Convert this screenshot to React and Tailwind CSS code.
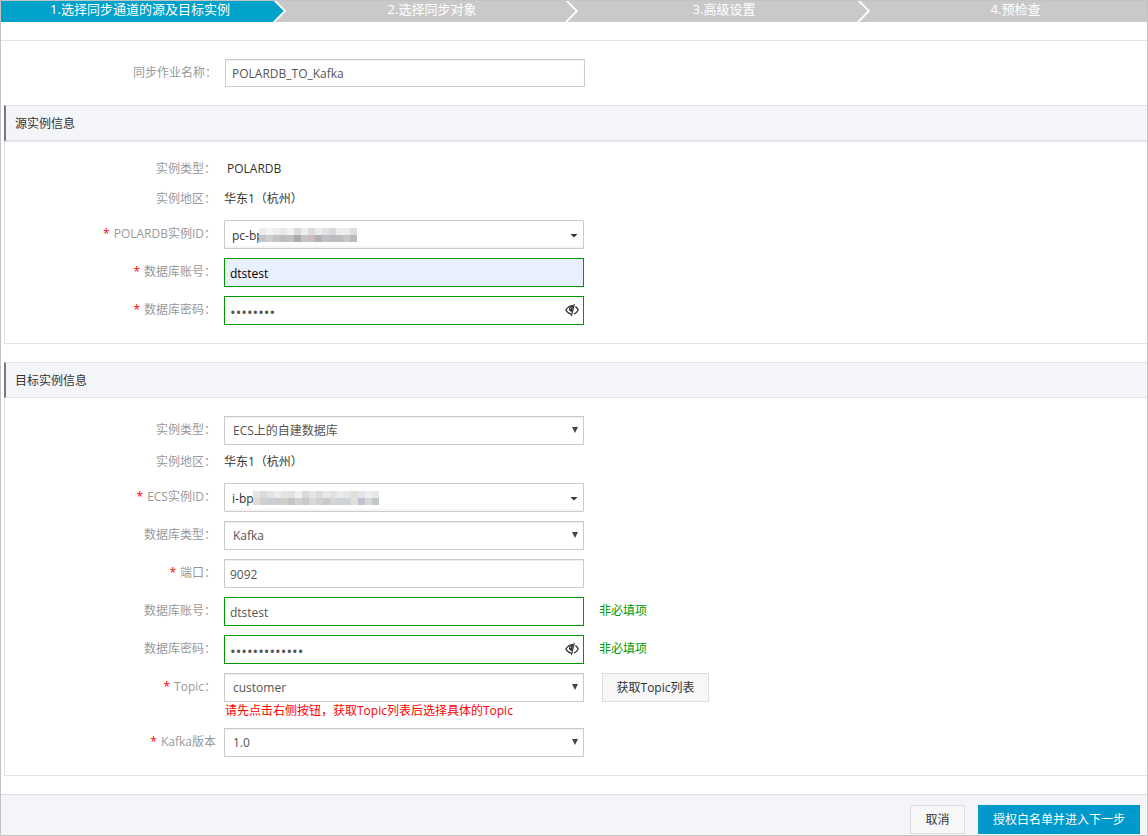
import React from "react";

const STEPS = [
  { text: "1.选择同步通道的源及目标实例", active: true },
  { text: "2.选择同步对象" },
  { text: "3.高级设置" },
  { text: "4.预检查" },
];

const MASK_SOURCE = [
  ["#ececee", "#f4f4f4", "#eeeeee", "#e9e9ea", "#f3f2ee", "#dcdcdc", "#eeeeee", "#dcdbdd", "#ececec", "#e2e2e4", "#d8d9d8", "#ededef", "#ececec", "#dedede"],
  ["#c6c4c6", "#cfcfcf", "#c3c3c5", "#bdbdbf", "#c1c1c1", "#a9aca9", "#c4c4c6", "#c8bcc0", "#b0b0b2", "#c0c0c4", "#b9bdc0", "#c0beb8", "#c6c6c8", "#b8bbbc"],
];

const MASK_TARGET = [
  ["#e6e4e4", "#dadadc", "#e2e3e6", "#ececec", "#e4e4e6", "#e2e2e2", "#f0f0f0", "#dadade", "#e6e6e8", "#dcdade", "#e8e8e8", "#e0e2e2", "#ebebeb", "#e6e6e8", "#e2dedc", "#e4e4ec", "#ededed", "#e6e8e6"],
  ["#dedcd4", "#ced0d2", "#cccfd0", "#c9cdd2", "#d2d0cc", "#c4c6c6", "#d2d2d4", "#ccc8c6", "#d8d8da", "#d0d0cc", "#ccc6c4", "#d4d4d8", "#ced2d0", "#ccd4d6", "#e2e0da", "#c6c2cc", "#d6d8da", "#c4c8c8"],
];

function Chevron({ active }) {
  return (
    <svg className="h-[21px] w-[14px] shrink-0" viewBox="0 0 14 21" aria-hidden="true">
      {active && <polygon points="0,0 3,0 13,10 2,21 0,21" fill="#00a2ca" />}
      <path d="M2 -1L13 10L1 22" fill="none" stroke="#fff" strokeWidth="1.8" />
    </svg>
  );
}

function Mosaic({ rows }) {
  return (
    <svg
      className="shrink-0"
      width={rows[0].length * 7}
      height="14"
      shapeRendering="crispEdges"
      aria-hidden="true"
    >
      {rows.map((row, y) =>
        row.map((fill, x) => (
          <rect key={`${x}-${y}`} x={x * 7} y={y * 7} width="7" height="7" fill={fill} />
        ))
      )}
    </svg>
  );
}

function EyeOff() {
  return (
    <svg className="h-[14px] w-[14px]" viewBox="0 0 14 14" aria-hidden="true">
      <path d="M9.3 0.8L6.4 13" stroke="#333" strokeWidth="1.2" fill="none" />
      <path
        d="M8 2.6C4.8 2.6 2.4 4.400 0.900 7C2.200 9.400 4 10.800 6.200 11.200"
        stroke="#333"
        strokeWidth="1.3"
        fill="none"
      />
      <path
        d="M10.400 3.600C11.600 4.400 12.600 5.600 13.200 7C12.200 9 10.800 10.400 9 11.100"
        stroke="#333"
        strokeWidth="1.3"
        fill="none"
      />
      <path d="M8.300 2.600L6.800 8.800C5 8.800 3.900 7.600 3.900 6C4 4.600 5.200 3 8.300 2.600Z" fill="#333" />
      <path d="M5.200 6C5.200 5.200 5.700 4.800 6.300 4.700" stroke="#fff" strokeWidth="0.8" fill="none" />
    </svg>
  );
}

function Row({ id, label, required, children }) {
  return (
    <div className="flex gap-2">
      <label
        htmlFor={id}
        className="flex h-[27px] w-[211px] shrink-0 items-center justify-end gap-1 whitespace-nowrap text-[#999]"
      >
        {required && <span className="text-[#f00]">*</span>}
        <span>{label}</span>
      </label>
      {children}
    </div>
  );
}

function TextRow({ label, children }) {
  return (
    <div className="flex h-[30px] items-center gap-2">
      <span className="w-[211px] shrink-0 text-right text-[#999]">{label}</span>
      {children}
    </div>
  );
}

function TextInput({ id, value, className }) {
  return (
    <input
      id={id}
      type="text"
      defaultValue={value}
      className={`h-[29px] w-[360px] border pt-[2px] outline-none ${className}`}
    />
  );
}

function Password({ id, value }) {
  return (
    <div className="relative w-[360px]">
      <input
        id={id}
        type="password"
        defaultValue={value}
        className="h-[29px] w-full border border-[#090] pl-[5px] pr-8 pt-[2px] text-[15px] text-[#555] outline-none"
      />
      <button type="button" aria-label="显示密码" className="absolute right-[5px] top-[7px]">
        <EyeOff />
      </button>
    </div>
  );
}

function Select({ id, value }) {
  return (
    <div className="relative w-[360px]">
      <select
        id={id}
        defaultValue={value}
        className="h-[29px] w-full appearance-none border border-[#ccc] bg-white pl-2 pr-6 text-[#555] shadow-[inset_0_1px_1px_rgba(0,0,0,0.075)] outline-none"
      >
        <option>{value}</option>
      </select>
      <svg className="pointer-events-none absolute right-[5px] top-[11px] h-[6px] w-[7px]" viewBox="0 0 7 6" aria-hidden="true">
        <path d="M0 0H6L3 6Z" fill="#444" />
      </svg>
    </div>
  );
}

function InstanceSelect({ id, value, mask, maskClass }) {
  return (
    <div className="relative w-[360px]">
      <select
        id={id}
        defaultValue={value}
        className="h-[29px] w-full appearance-none rounded-[1px] border border-[#ccc] bg-white pl-[7px] pr-6 pt-[2px] text-[#333] shadow-[inset_0_-2px_1px_rgba(0,0,0,0.04)] outline-none"
      >
        <option>{value}</option>
      </select>
      <span className={`pointer-events-none absolute top-2 ${maskClass}`}>
        <Mosaic rows={mask} />
      </span>
      <svg className="pointer-events-none absolute right-[6px] top-[14px] h-[4px] w-[8px]" viewBox="0 0 8 4" aria-hidden="true">
        <path d="M0.500 0H7.500L4 3.500Z" fill="#333" />
      </svg>
    </div>
  );
}

function Section({ title, headerClass, children }) {
  return (
    <section className="mb-[18px] ml-[3px]">
      <h2
        className={`flex items-center border-l-2 border-t border-l-[#778] border-t-[#e0e4e8] border-b-[#e0e4e8] bg-[#f4f5f9] pl-[9px] pt-[2px] text-[#333] ${headerClass}`}
      >
        {title}
      </h2>
      <div className="border-b border-l border-[#e1e4e8] pb-[18px]">{children}</div>
    </section>
  );
}

export default function App() {
  return (
    <form
      className="border border-[#c3c3c3] bg-white font-['Open_Sans','Noto_Sans_CJK_SC',sans-serif] text-xs text-[#333]"
      onSubmit={(e) => e.preventDefault()}
    >
      <ol className="grid grid-cols-[285fr_292fr_292fr_277fr] bg-[#c9c9c9] text-[13px] leading-[17px] text-white">
        {STEPS.map((s, i) => (
          <li key={s.text} className="flex h-[21px]">
            <span
              className={`flex-1 text-center ${s.active ? "bg-[#00a2ca] pl-[7px]" : "pl-[14px]"}`}
            >
              {s.text}
            </span>
            {i < 3 && <Chevron active={s.active} />}
          </li>
        ))}
      </ol>

      <div className="mt-[18px] border-t border-[#e1e4e8] pb-[18px] pl-[5px] pt-[18px]">
        <div className="flex gap-2">
          <label htmlFor="job" className="flex h-[27px] w-[211px] shrink-0 items-center justify-end text-[#999]">
            同步作业名称：
          </label>
          <input
            id="job"
            type="text"
            defaultValue="POLARDB_TO_Kafka"
            className="h-7 w-[360px] border border-[#ccc] pl-[6px] text-[#555] shadow-[inset_0_1px_1px_rgba(0,0,0,0.075)] outline-none"
          />
        </div>
      </div>

      <Section title="源实例信息" headerClass="h-[37px] border-b-2">
        <div className="pt-3">
          <TextRow label="实例类型：">
            <span className="pl-[3px]">POLARDB</span>
          </TextRow>
          <TextRow label="实例地区：">
            <span>华东1（杭州）</span>
          </TextRow>
        </div>
        <div className="flex flex-col gap-[9px] pt-[6px]">
          <Row id="src-id" label="POLARDB实例ID：" required>
            <InstanceSelect id="src-id" value="pc-bp" mask={MASK_SOURCE} maskClass="left-[35px]" />
          </Row>
          <Row id="src-user" label="数据库账号：" required>
            <TextInput id="src-user" value="dtstest" className="border-[#090] bg-[#e8f0fe] pl-[5px] text-black" />
          </Row>
          <Row id="src-pass" label="数据库密码：" required>
            <Password id="src-pass" value="password" />
          </Row>
        </div>
      </Section>

      <Section title="目标实例信息" headerClass="h-9 border-b">
        <div className="flex flex-col gap-[2px] pt-[18px]">
          <Row id="dst-type" label="实例类型：">
            <Select id="dst-type" value="ECS上的自建数据库" />
          </Row>
          <TextRow label="实例地区：">
            <span>华东1（杭州）</span>
          </TextRow>
        </div>
        <div className="flex flex-col gap-[9px] pt-[6px]">
          <Row id="dst-id" label="ECS实例ID：" required>
            <InstanceSelect id="dst-id" value="i-bp" mask={MASK_TARGET} maskClass="left-[29px]" />
          </Row>
          <Row id="db-type" label="数据库类型：">
            <Select id="db-type" value="Kafka" />
          </Row>
          <Row id="port" label="端口：" required>
            <TextInput
              id="port"
              value="9092"
              className="border-[#ccc] pl-[5px] text-[#555] shadow-[inset_0_1px_1px_rgba(0,0,0,0.075)]"
            />
          </Row>
          <Row id="dst-user" label="数据库账号：">
            <TextInput id="dst-user" value="dtstest" className="border-[#090] pl-[5px] text-[#555]" />
            <span className="pl-[7px] leading-[27px] text-[#090]">非必填项</span>
          </Row>
          <Row id="dst-pass" label="数据库密码：">
            <Password id="dst-pass" value="kafkapassword" />
            <span className="pl-[7px] leading-[27px] text-[#090]">非必填项</span>
          </Row>
          <Row id="topic" label="Topic：" required>
            <div>
              <Select id="topic" value="customer" />
              <p className="pl-px leading-[17px] text-[#f00]">
                请先点击右侧按钮，获取Topic列表后选择具体的Topic
              </p>
            </div>
            <button type="button" className="ml-[10px] h-[29px] w-[107px] border border-[#ddd] bg-[#f7f7f7] text-[#333]">
              获取Topic列表
            </button>
          </Row>
          <Row id="version" label="Kafka版本" required>
            <Select id="version" value="1.0" />
          </Row>
        </div>
      </Section>

      <footer className="flex justify-end gap-[13px] border-t border-[#ddd] bg-[#f4f5f9] pb-px pr-[7px] pt-[10px]">
        <button type="button" className="h-[29px] w-[55px] border border-[#ddd] bg-[#f7f7f7] text-[#333]">
          取消
        </button>
        <button type="submit" className="h-[29px] w-[162px] bg-[#09c] text-white">
          授权白名单并进入下一步
        </button>
      </footer>
    </form>
  );
}
